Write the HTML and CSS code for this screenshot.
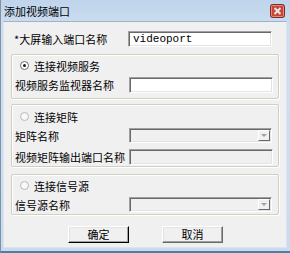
FILE: index.html
```html
<!DOCTYPE html>
<html lang="zh-CN">
<head>
    <meta charset="UTF-8">
    <title>添加视频端口</title>
    <link rel="stylesheet" href="styles.css">
</head>
<body>
    <div class="window">
        <div class="titlebar">
            <span class="title">添加视频端口</span>
            <span class="close">
                <svg width="15" height="14" viewBox="0 0 15 14">
                    <rect x="0.5" y="0.5" width="14" height="13" rx="2" fill="#c4473a" stroke="#7d2a22"/>
                    <rect x="1.5" y="1.5" width="12" height="11" rx="1" fill="none" stroke="#e08a80"/>
                    <path d="M4.5 4 L10.5 10 M10.5 4 L4.5 10" stroke="#f4e4e2" stroke-width="2"/>
                </svg>
            </span>
        </div>
        <div class="client">
            <div class="row top-row">
                <label class="label">*大屏输入端口名称</label>
                <div class="input mono">videoport</div>
            </div>

            <div class="group g1">
                <div class="radio-row">
                    <span class="radio checked"></span>
                    <span>连接视频服务</span>
                </div>
                <div class="row r-monitor">
                    <label class="label">视频服务监视器名称</label>
                    <div class="input"></div>
                </div>
            </div>

            <div class="group g2">
                <div class="radio-row">
                    <span class="radio"></span>
                    <span>连接矩阵</span>
                </div>
                <div class="row r-matrix">
                    <label class="label">矩阵名称</label>
                    <div class="combo"><span class="arrow"></span></div>
                </div>
                <div class="row r-output">
                    <label class="label">视频矩阵输出端口名称</label>
                    <div class="input disabled"></div>
                </div>
            </div>

            <div class="group g3">
                <div class="radio-row">
                    <span class="radio"></span>
                    <span>连接信号源</span>
                </div>
                <div class="row r-source">
                    <label class="label">信号源名称</label>
                    <div class="combo"><span class="arrow"></span></div>
                </div>
            </div>

            <div class="buttons">
                <button class="btn default">确定</button>
                <button class="btn">取消</button>
            </div>
        </div>
    </div>
</body>
</html>
```

FILE: styles.css
```css
body {
    margin: 0;
    font-family: "Noto Sans CJK SC", sans-serif;
    font-size: 11px;
    color: #000;
}
.window {
    width: 290px;
    height: 253px;
    box-sizing: border-box;
    display: flex;
    flex-direction: column;
    background: linear-gradient(#bfd4eb, #cfdff1 30px, #c9dcef);
    border-left: 1px solid #7f93a8;
    border-bottom: 2px solid #4f7ea3;
    padding: 0 3px 3px 2px;
}
.titlebar {
    height: 21px;
    display: flex;
    align-items: center;
    justify-content: space-between;
    padding: 0 2px 0 1px;
}
.title {
    font-size: 11px;
    line-height: 14px;
}
.close {
    display: flex;
    margin-top: 1px;
}
.client {
    flex: 1;
    background: #f0f0f0;
    border: 1px solid #d9e4ef;
    border-top-color: #9fb2c6;
    padding: 0 0 0 7px;
}
.row {
    display: flex;
    align-items: center;
    height: 16px;
}
.label {
    width: 114px;
    padding-left: 3px;
    white-space: nowrap;
}
.top-row {
    margin-top: 9px;
}
.input {
    width: 144px;
    height: 16px;
    box-sizing: border-box;
    background: #fff;
    border: 1px solid;
    border-color: #a0a0a0 #fff #fff #a0a0a0;
    box-shadow: inset 1px 1px 0 #696969, inset -1px -1px 0 #e3e3e3;
    padding: 1px 0 0 4px;
    line-height: 13px;
}
.input.disabled {
    background: #f0f0f0;
}
.mono {
    font-family: "Liberation Mono", monospace;
    font-size: 11px;
}
.combo {
    width: 143px;
    height: 15px;
    box-sizing: border-box;
    background: #f0f0f0;
    border: 1px solid;
    border-color: #a0a0a0 #fff #fff #a0a0a0;
    box-shadow: inset 1px 1px 0 #696969, inset -1px -1px 0 #e3e3e3;
    display: flex;
    justify-content: flex-end;
    padding: 1px;
}
.arrow {
    width: 12px;
    height: 11px;
    box-sizing: border-box;
    border: 1px solid;
    border-color: #fff #696969 #696969 #fff;
    background: #f0f0f0;
    position: relative;
}
.arrow::after {
    content: "";
    position: absolute;
    left: 2px;
    top: 3px;
    border-left: 3px solid transparent;
    border-right: 3px solid transparent;
    border-top: 3px solid #a0a0a0;
}
.group {
    width: 268px;
    box-sizing: border-box;
    border: 1px solid #d0d0bf;
    border-radius: 2px;
    box-shadow: inset 1px 1px 0 #fff, 1px 1px 0 #fff;
}
.g1 {
    height: 45px;
    margin-top: 7px;
    padding-top: 3px;
}
.g2 {
    height: 63px;
    margin-top: 5px;
    padding-top: 4px;
}
.g3 {
    height: 41px;
    margin-top: 7px;
    padding-top: 3px;
}
.radio-row {
    display: flex;
    align-items: center;
    height: 15px;
    padding-left: 8px;
}
.radio {
    width: 9px;
    height: 9px;
    box-sizing: border-box;
    border-radius: 50%;
    border: 1px solid #b8b8b8;
    background: #f8f8f8;
    margin-right: 5px;
    position: relative;
}
.radio.checked {
    border-color: #6a6a6a;
    background: #fff;
}
.radio.checked::after {
    content: "";
    position: absolute;
    left: 2px;
    top: 2px;
    width: 3px;
    height: 3px;
    border-radius: 50%;
    background: #1a1a1a;
}
.r-monitor {
    margin-top: 4px;
}
.r-matrix {
    margin-top: 4px;
    height: 15px;
}
.r-output {
    margin-top: 6px;
}
.r-source {
    margin-top: 4px;
    height: 15px;
}
.buttons {
    display: flex;
    gap: 33px;
    margin-top: 11px;
    padding-left: 57px;
}
.btn {
    width: 61px;
    height: 17px;
    box-sizing: border-box;
    font-family: "Noto Sans CJK SC", sans-serif;
    font-size: 11px;
    line-height: 13px;
    padding: 0;
    background: #f0f0f0;
    border: 1px solid;
    border-color: #fff #696969 #696969 #fff;
    box-shadow: inset -1px -1px 0 #a0a0a0, inset 1px 1px 0 #e3e3e3;
}
.btn.default {
    border-color: #fff #000 #000 #fff;
}
```
